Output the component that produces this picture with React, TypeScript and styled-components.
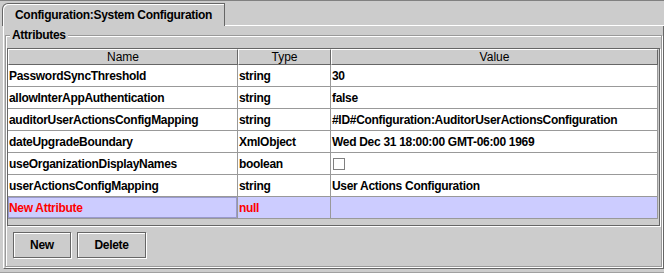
import React from "react";
import styled, { createGlobalStyle } from "styled-components";

interface IAttribute {
  name: string;
  type: string;
  value: string | boolean | null;
  isNew?: boolean;
}

const attributes: IAttribute[] = [
  { name: "PasswordSyncThreshold", type: "string", value: "30" },
  { name: "allowInterAppAuthentication", type: "string", value: "false" },
  {
    name: "auditorUserActionsConfigMapping",
    type: "string",
    value: "#ID#Configuration:AuditorUserActionsConfiguration",
  },
  {
    name: "dateUpgradeBoundary",
    type: "XmlObject",
    value: "Wed Dec 31 18:00:00 GMT-06:00 1969",
  },
  { name: "useOrganizationDisplayNames", type: "boolean", value: false },
  {
    name: "userActionsConfigMapping",
    type: "string",
    value: "User Actions Configuration",
  },
  { name: "New Attribute", type: "null", value: null, isNew: true },
];

function App() {
  return (
    <>
      <GlobalStyle />
      <Frame>
        <TabStrip>
          <Tab>Configuration:System Configuration</Tab>
          <TabFiller />
        </TabStrip>
        <TabContent>
          <GroupBox>
            <GroupTitle>Attributes</GroupTitle>
            <ScrollPane>
              <Grid>
                <HeaderCell>Name</HeaderCell>
                <HeaderCell>Type</HeaderCell>
                <HeaderCell>Value</HeaderCell>
                {attributes.map((attr) => (
                  <React.Fragment key={attr.name}>
                    <Cell $selected={attr.isNew} $focused={attr.isNew}>
                      {attr.name}
                    </Cell>
                    <Cell $selected={attr.isNew}>{attr.type}</Cell>
                    <Cell $selected={attr.isNew}>
                      {typeof attr.value === "boolean" ? (
                        <CheckBox />
                      ) : (
                        attr.value
                      )}
                    </Cell>
                  </React.Fragment>
                ))}
              </Grid>
            </ScrollPane>
            <ButtonRow>
              <StyledButton $width={58}>New</StyledButton>
              <StyledButton $width={69}>Delete</StyledButton>
            </ButtonRow>
          </GroupBox>
        </TabContent>
      </Frame>
    </>
  );
}

export default App;

const GlobalStyle = createGlobalStyle`
  html, body {
    margin: 0;
    padding: 0;
    background: #cccccc;
  }
  body {
    font-family: "Liberation Sans", Arial, sans-serif;
    font-size: 12px;
    color: #000;
  }
  * {
    box-sizing: border-box;
  }
`;

const Frame = styled.div`
  width: 664px;
  height: 273px;
  display: flex;
  flex-direction: column;
  background: #cccccc;
  border-top: 1px solid #808080;
  border-bottom: 1px solid #a0a0a0;
`;

const TabStrip = styled.div`
  height: 25px;
  display: flex;
  align-items: flex-end;
  padding-left: 2px;
`;

const Tab = styled.div`
  width: 223px;
  height: 23px;
  padding: 4px 0 0 12px;
  border: 1px solid #666666;
  border-bottom: none;
  border-top-left-radius: 6px;
  box-shadow: inset 1px 1px 0 #ffffff;
  font-weight: bold;
  line-height: 14px;
  letter-spacing: -0.3px;
  white-space: nowrap;
`;

const TabFiller = styled.div`
  flex: 1;
  border-bottom: 1px solid #ffffff;
`;

const TabContent = styled.div`
  flex: 1;
  display: flex;
  flex-direction: column;
  margin: 0 0 3px 3px;
  padding: 9px 1px 1px 1px;
  border-left: 1px solid #ffffff;
  border-right: 1px solid #666666;
  border-bottom: 1px solid #666666;
`;

const GroupBox = styled.div`
  flex: 1;
  display: flex;
  flex-direction: column;
  padding: 0 1px 8px 1px;
  border: 1px solid #999999;
  box-shadow: inset 1px 1px 0 #ffffff, 1px 1px 0 #ffffff;
`;

const GroupTitle = styled.div`
  align-self: flex-start;
  margin: -8px 0 6px 3px;
  padding: 0 2px;
  background: #cccccc;
  font-weight: bold;
  line-height: 14px;
  letter-spacing: -0.3px;
`;

const ScrollPane = styled.div`
  height: 178px;
  border: 1px solid #666666;
  box-shadow: 1px 1px 0 #ffffff;
  background: #cccccc;
`;

const Grid = styled.div`
  display: grid;
  grid-template-columns: 230px 93px 327px;
  grid-auto-rows: 22px;
  grid-template-rows: 16px;
`;

const HeaderCell = styled.div`
  height: 16px;
  border-top: 1px solid #ffffff;
  border-left: 1px solid #ffffff;
  border-right: 1px solid #666666;
  border-bottom: 1px solid #666666;
  text-align: center;
  line-height: 14px;
`;

const Cell = styled.div<{ $selected?: boolean; $focused?: boolean }>`
  display: flex;
  align-items: center;
  padding-left: 1px;
  border-right: 1px solid #999999;
  border-bottom: 1px solid #999999;
  background: ${(p) => (p.$selected ? "#ccccff" : "#ffffff")};
  color: ${(p) => (p.$selected ? "#ff0000" : "#000000")};
  box-shadow: ${(p) => (p.$focused ? "inset 0 0 0 1px #9999cc" : "none")};
  font-weight: bold;
  letter-spacing: -0.3px;
  white-space: nowrap;
  overflow: hidden;
`;

const CheckBox = styled.span`
  width: 12px;
  height: 12px;
  margin-left: 1px;
  border: 1px solid #808080;
  background: #ffffff;
`;

const ButtonRow = styled.div`
  display: flex;
  gap: 6px;
  margin: 6px 0 0 6px;
`;

const StyledButton = styled.button<{ $width: number }>`
  width: ${(p) => p.$width}px;
  height: 26px;
  padding: 0;
  border: 1px solid #666666;
  box-shadow: inset 1px 1px 0 #ffffff, 1px 1px 0 #ffffff;
  background: #cccccc;
  font-family: inherit;
  font-size: 12px;
  font-weight: bold;
  letter-spacing: -0.3px;
  color: #000;
`;
